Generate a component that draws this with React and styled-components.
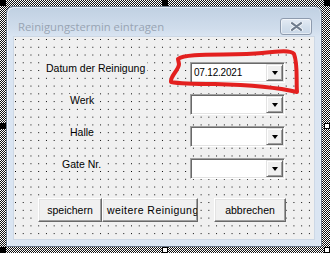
import React from "react";
import styled, { createGlobalStyle } from "styled-components";

const Global = createGlobalStyle`
  html, body { margin: 0; padding: 0; background: #fff; }
  body { width: 330px; height: 253px; overflow: hidden; }
`;

const Stage = styled.div`
  position: relative;
  width: 330px;
  height: 253px;
  box-sizing: border-box;
  padding: 6px 8px 6px 6px;
  display: flex;
  background-color: #fff;
  background-image: conic-gradient(#111 25%, transparent 0 50%, #111 0 75%, transparent 0);
  background-size: 2px 2px;
`;

const Handle = styled.div`
  position: absolute;
  width: 6px;
  height: 6px;
  box-sizing: border-box;
  background: ${(p) => (p.$white ? "#fff" : "#000")};
  border: 1px solid #000;
  ${(p) => (p.$left !== undefined ? `left:${p.$left}px;` : "")}
  ${(p) => (p.$right !== undefined ? `right:${p.$right}px;` : "")}
  ${(p) => (p.$top !== undefined ? `top:${p.$top}px;` : "")}
  ${(p) => (p.$bottom !== undefined ? `bottom:${p.$bottom}px;` : "")}
`;

const Window = styled.div`
  flex: 1;
  display: flex;
  flex-direction: column;
  border: 1px solid #6b7a8d;
  border-radius: 7px 7px 0 0;
  background: linear-gradient(#c0d0e2 0px, #d0ddec 22px, #dae5f2 30px, #dae5f2 100%);
  box-shadow: inset 1px 1px 0 rgba(255, 255, 255, 0.55), inset -1px 0 0 rgba(255, 255, 255, 0.4);
`;

const TitleBar = styled.div`
  height: 30px;
  box-sizing: border-box;
  display: flex;
  align-items: center;
  justify-content: space-between;
  padding: 10px 9px 2px 11px;
`;

const Title = styled.span`
  font-family: "Open Sans", "Noto Sans", sans-serif;
  font-size: 11.3px;
  color: #98a4b3;
  white-space: nowrap;
`;

const CloseButton = styled.div`
  width: 32px;
  height: 17px;
  box-sizing: border-box;
  border: 1px solid #8e9bae;
  border-radius: 3px;
  background: linear-gradient(#e4ebf4, #d2deeb 55%, #c9d7e7);
  box-shadow: inset 0 0 0 1px rgba(255, 255, 255, 0.5);
  display: flex;
  align-items: center;
  justify-content: center;
`;

const Client = styled.div`
  flex: 1;
  margin: 0 7px 7px;
  display: flex;
  flex-direction: column;
  background-color: #f0f0f0;
  background-image: conic-gradient(at 1px 1px, transparent 75%, #000 0);
  background-size: 7.74px 7.78px;
  background-position: 1px 2px;
  padding-top: 25px;
  box-shadow: 0 0 0 1px #cdd8e5;
`;

const Fields = styled.div`
  display: flex;
  flex-direction: column;
  gap: 11px;
`;

const Row = styled.div`
  display: grid;
  grid-template-columns: 176px 95px;
  height: 21px;
`;

const Label = styled.span`
  justify-self: start;
  align-self: start;
  margin-left: ${(p) => p.$indent}px;
  padding: 0 2px 0 3px;
  background: #f0f0f0;
  font-family: "Liberation Sans", Arial, sans-serif;
  font-size: 10.5px;
  line-height: 13px;
  color: #000;
  white-space: nowrap;
`;

const Combo = styled.div`
  display: flex;
  box-sizing: border-box;
  height: 21px;
  border: 1px solid;
  border-color: #a0a0a0 #ffffff #ffffff #a0a0a0;
  box-shadow: inset 1px 1px 0 #696969, inset -1px -1px 0 #e3e3e3;
  background: #fff;
  padding: 1px;
`;

const ComboText = styled.span`
  flex: 1;
  padding-left: 2px;
  font-family: "Liberation Sans", Arial, sans-serif;
  font-size: 10px;
  letter-spacing: -0.2px;
  line-height: 17px;
  color: #000;
`;

const DropButton = styled.div`
  width: 17px;
  box-sizing: border-box;
  background: #f0f0f0;
  border: 1px solid;
  border-color: #e3e3e3 #696969 #696969 #e3e3e3;
  box-shadow: inset 1px 1px 0 #fff, inset -1px -1px 0 #a0a0a0;
  display: flex;
  align-items: center;
  justify-content: center;
`;

const Arrow = styled.span`
  width: 0;
  height: 0;
  border-left: 3.5px solid transparent;
  border-right: 3.5px solid transparent;
  border-top: 4px solid #000;
  margin-top: 1px;
`;

const ButtonRow = styled.div`
  display: flex;
  margin-top: 19px;
  padding-left: 24px;
`;

const Button = styled.div`
  width: ${(p) => p.$w}px;
  margin-left: ${(p) => p.$gap || 0}px;
  height: 24px;
  box-sizing: border-box;
  padding: 0 4px;
  background: #f0f0f0;
  border: 1px solid;
  border-color: #fff #696969 #696969 #fff;
  box-shadow: inset -1px -1px 0 #a0a0a0, inset 1px 1px 0 #e3e3e3;
  font-family: "Liberation Sans", Arial, sans-serif;
  font-size: 10.5px;
  letter-spacing: ${(p) => p.$spacing || 0}px;
  line-height: 22px;
  text-align: center;
  white-space: nowrap;
  overflow: hidden;
  color: #000;
`;

const Marker = styled.svg`
  position: absolute;
  left: 0;
  top: 0;
  pointer-events: none;
`;

const fields = [
  { label: "Datum der Reinigung", indent: 29, value: "07.12.2021" },
  { label: "Werk", indent: 53, value: "" },
  { label: "Halle", indent: 53, value: "" },
  { label: "Gate Nr.", indent: 45, value: "" },
];

export default function App() {
  return (
    <>
      <Global />
      <Stage>
        <Window>
          <TitleBar>
            <Title>Reinigungstermin eintragen</Title>
            <CloseButton>
              <svg width="13" height="9" viewBox="0 0 13 9">
                <path d="M2 1.2 L11 7.8 M11 1.2 L2 7.8" stroke="#f4f7fb" strokeWidth="4" strokeLinecap="round" />
                <path d="M2 1.2 L11 7.8 M11 1.2 L2 7.8" stroke="#6f7c8d" strokeWidth="2.2" strokeLinecap="round" />
              </svg>
            </CloseButton>
          </TitleBar>
          <Client>
            <Fields>
              {fields.map((f) => (
                <Row key={f.label}>
                  <Label $indent={f.indent}>{f.label}</Label>
                  <Combo>
                    <ComboText>{f.value}</ComboText>
                    <DropButton>
                      <Arrow />
                    </DropButton>
                  </Combo>
                </Row>
              ))}
            </Fields>
            <ButtonRow>
              <Button $w={64}>speichern</Button>
              <Button $w={96} $spacing={0.45}>weitere Reinigung</Button>
              <Button $w={72} $gap={16}>abbrechen</Button>
            </ButtonRow>
          </Client>
        </Window>
        <Handle $left={0} $top={0} />
        <Handle $left={162} $top={0} />
        <Handle $right={0} $top={0} />
        <Handle $left={0} $top={123} />
        <Handle $right={0} $top={123} $white />
        <Handle $left={0} $bottom={0} />
        <Handle $left={162} $bottom={0} $white />
        <Handle $right={0} $bottom={0} $white />
        <Marker width="330" height="253" viewBox="0 0 330 253">
          <path
            d="M178 59 C 186 52, 232 56, 262 53 C 280 51, 291 50, 294 54 C 298 64, 296 80, 297 92 C 280 88, 250 85, 215 84 C 196 84, 181 84, 171 82 C 170 76, 179 70, 179 64 Z"
            fill="none"
            stroke="#e3201f"
            strokeWidth="4"
            strokeLinejoin="round"
          />
        </Marker>
      </Stage>
    </>
  );
}
